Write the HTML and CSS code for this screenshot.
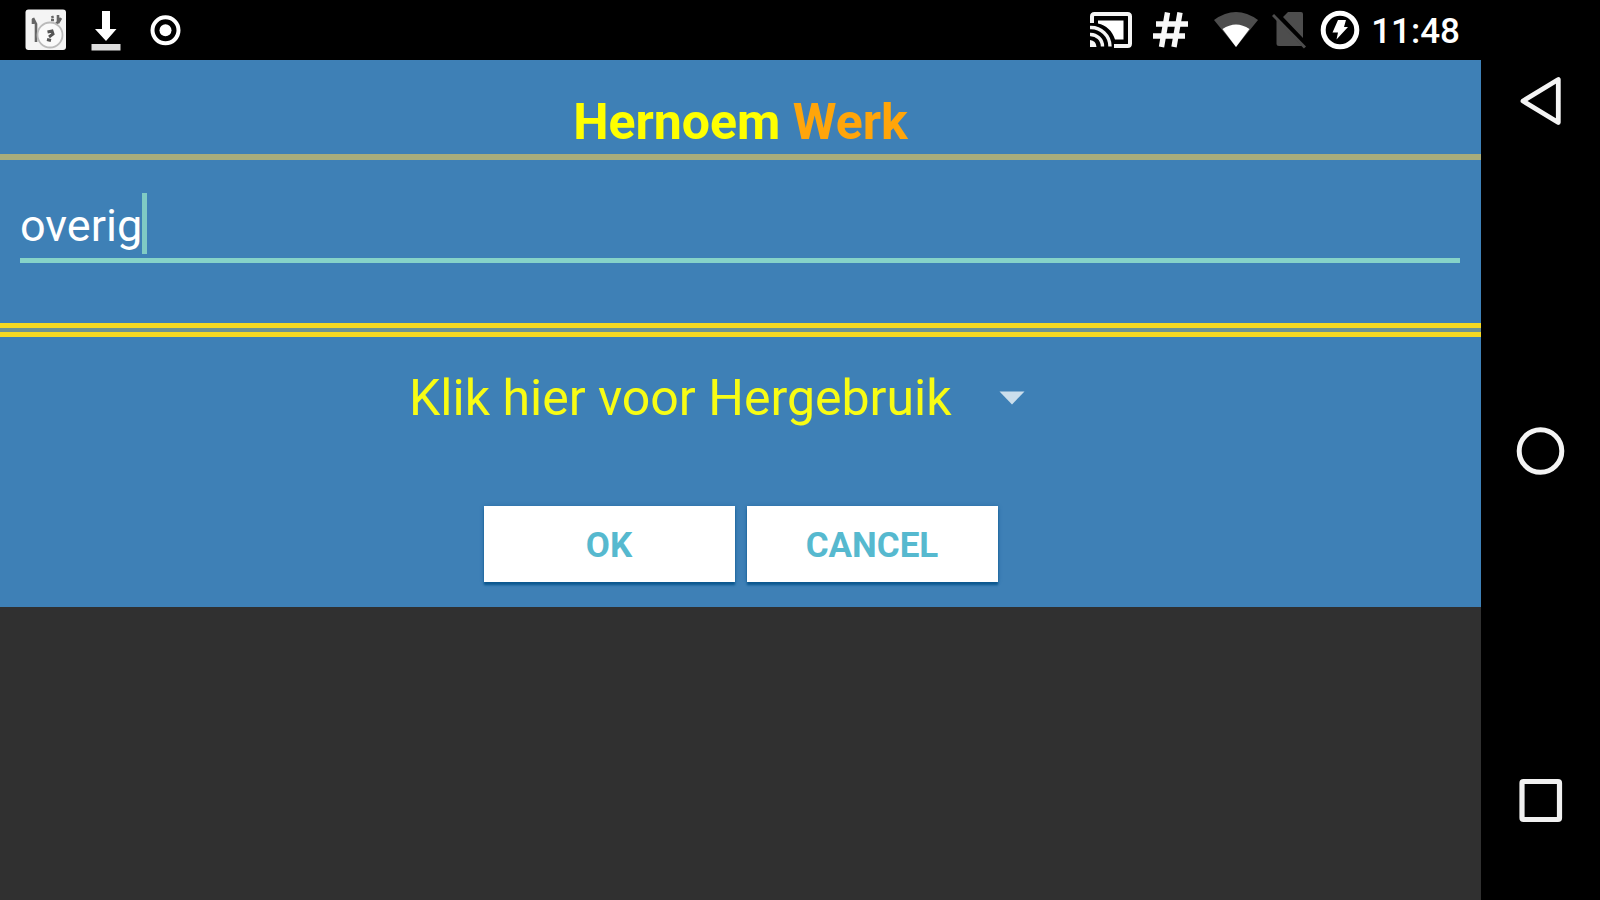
FILE: index.html
```
<!DOCTYPE html>
<html lang="nl">
<head>
<meta charset="utf-8">
<title>Hernoem Werk</title>
<link rel="stylesheet" href="styles.css">
</head>
<body>
<div class="device">
  <div class="screen">
    <header class="status">
      <div class="status-group">
        <svg class="icon app-icon" width="42" height="42" viewBox="0 0 42 42">
          <rect x="0.500" y="0.500" width="40.500" height="40.500" rx="3" fill="#f4f4f4"/>
          <path d="M8 9l3 6v18M8 10v5M26 11h3M27 7l1 2M33 6v7l-3 3M36 9l-3 5" fill="none" stroke="#666" stroke-width="2.600"/>
          <circle cx="25" cy="26" r="12.500" fill="#fafafa" stroke="#bbb" stroke-width="1.800"/>
          <path d="M22.500 23l4.500-1 1 3-4 3M22 30.500l4 1" fill="none" stroke="#555" stroke-width="3"/>
        </svg>
        <svg class="icon download-icon" width="30" height="42" viewBox="0 0 30 42">
          <path d="M11 2h8v18h6.500L15 32 4 20h7z" fill="#fff"/>
          <rect x="0.500" y="35" width="29" height="6.500" fill="#ddd"/>
        </svg>
        <svg class="icon" width="32" height="32" viewBox="0 0 32 32">
          <circle cx="15.500" cy="16.300" r="13" fill="none" stroke="#fff" stroke-width="4"/>
          <circle cx="15.500" cy="16.300" r="6" fill="#fff"/>
        </svg>
      </div>
      <div class="status-group status-right">
        <svg class="icon cast-icon" width="42" height="36" viewBox="0 0 42 36">
          <path d="M2 11V4.500Q2 2 4.500 2h33Q40 2 40 4.500v27q0 2.500-2.500 2.500H24" fill="none" stroke="#f4f4f4" stroke-width="4"/>
          <path d="M8 8.500h25.500v19H25C22.500 19 16 13 8 11.500z" fill="#fff"/>
          <path d="M0 15.500A19 19 0 0 1 20 34.500M0 22.500A12 12 0 0 1 12.500 34.500" fill="none" stroke="#f4f4f4" stroke-width="3.400"/>
          <path d="M0 28q6 .5 6.500 7H0z" fill="#f4f4f4"/>
        </svg>
        <svg class="icon hash-icon" width="36" height="36" viewBox="0 0 36 36">
          <path d="M14.500 0.500L8.500 35M27 0.500L21 35M3 12h32M0 24h32" fill="none" stroke="#f8f8f8" stroke-width="5.400"/>
        </svg>
        <svg class="icon wifi-icon" width="46" height="36" viewBox="0 0 46 36">
          <path d="M1 8Q23-8 45 8L23 35z" fill="#4d4d4d"/>
          <path d="M9.500 17Q23 8 36.500 17L23 35z" fill="#fff"/>
        </svg>
        <svg class="icon sim-icon" width="34" height="37" viewBox="0 0 34 37">
          <path d="M11 5l5-5h13q2 0 2 2v24zM4.500 7L30 34H7q-2.500 0-2.500-2.500z" fill="#4d4d4d"/>
          <path d="M1 3l32 32.500" stroke="#4d4d4d" stroke-width="3" fill="none"/>
        </svg>
        <svg class="icon battery-icon" width="40" height="40" viewBox="0 0 40 40">
          <circle cx="20" cy="20" r="16.800" fill="none" stroke="#fff" stroke-width="5"/>
          <path d="M18 10h8l-2 7h4L16.500 29.500l1.500-7h-5.500z" fill="#fff"/>
        </svg>
        <span class="clock">11:48</span>
      </div>
    </header>
    <main class="dialog">
      <h1 class="title"><span>Hernoem</span> <span class="title-accent">Werk</span></h1>
      <div class="field"><span class="field-text">overig</span><span class="cursor"></span></div>
      <div class="divider"></div>
      <div class="spinner">
        <span>Klik hier voor Hergebruik</span>
        <svg class="caret" width="26" height="14" viewBox="0 0 26 14"><path d="M0.500 0.500h25L13 13.500z" fill="#cbdeec"/></svg>
      </div>
      <div class="actions">
        <button class="button">OK</button>
        <button class="button">CANCEL</button>
      </div>
    </main>
  </div>
  <nav class="navbar">
    <svg width="50" height="50" viewBox="0 0 50 50"><path d="M43.300 3.500v43L8 25z" fill="none" stroke="#f4f4f4" stroke-width="4.800" stroke-linejoin="round"/></svg>
    <svg width="50" height="50" viewBox="0 0 50 50"><circle cx="25.500" cy="25" r="21.300" fill="none" stroke="#f4f4f4" stroke-width="5"/></svg>
    <svg width="50" height="50" viewBox="0 0 50 50"><rect x="7" y="5.500" width="37.500" height="38" rx="1.500" fill="none" stroke="#f0f0f0" stroke-width="5.200"/></svg>
  </nav>
</div>
</body>
</html>
```
FILE: styles.css
```
* { box-sizing: border-box; }
body { margin: 0; font-family: Roboto, "Liberation Sans", sans-serif; }
.device { display: flex; width: 1600px; height: 900px; background: #000; overflow: hidden; }
.screen { width: 1481px; background: #303030; }
.status { display: flex; justify-content: space-between; height: 60px; padding: 0 21px 0 25px; background: #000; color: #fff; }
.status-group { display: flex; align-items: center; }
.icon { display: block; flex: none; }
.download-icon { margin: 0 29px 0 24px; }
.hash-icon { margin: 0 24px 0 21px; }
.wifi-icon { margin-right: 13px; }
.sim-icon { margin-right: 14px; }
.battery-icon { margin-right: 11px; }
.clock { font-size: 35px; font-weight: 500; line-height: 60px; padding-top: 4px; }
.dialog { height: 546.500px; background: #3e80b6; }
.title { height: 100px; margin: 0; padding-top: 31px; border-bottom: 6px solid #a8ad7c; font-size: 50px; line-height: 62px; font-weight: 700; text-align: center; color: #ff0; }
.title-accent { color: #ffa50a; }
.field { display: flex; height: 103px; margin: 0 21px 0 20px; padding-top: 33px; border-bottom: 5px solid #86d3c8; color: #fff; }
.field-text { font-size: 45px; line-height: 65px; height: 61px; }
.cursor { width: 5px; height: 61px; background: #80cbc4; }
.divider { height: 14px; margin-top: 60px; border-top: 5px solid #f6d922; border-bottom: 5px solid #f6d922; background: #6f9391; }
.spinner { display: flex; align-items: center; height: 122px; padding-left: 409px; font-size: 50px; line-height: 60px; color: #f8fc14; }
.caret { margin: 0 0 1px 47px; }
.actions { display: flex; justify-content: center; gap: 12px; margin-top: 47px; }
.button { width: 251px; height: 75.500px; padding: 4px 0 0; border: 0; background: #fff; color: #56b9cf; font: 700 35px Roboto, "Liberation Sans", sans-serif; box-shadow: 0 3px 2px #0c5890, 0 0 4px rgba(20, 90, 150, .45); }
.navbar { flex: 1; display: flex; flex-direction: column; align-items: center; justify-content: space-between; padding: 76px 1px 74px 0; }
```
